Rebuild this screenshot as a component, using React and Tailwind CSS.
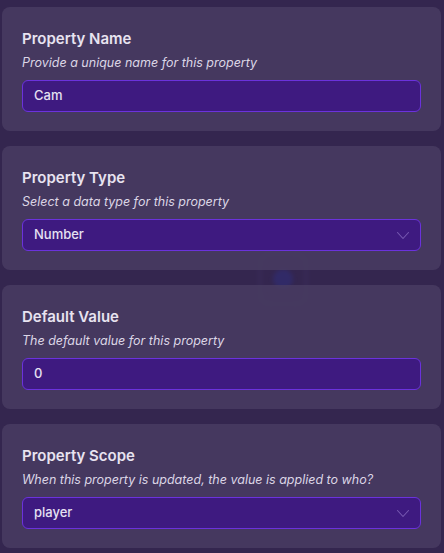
const fields = [
  { title: 'Property Name', hint: 'Provide a unique name for this property', value: 'Cam' },
  { title: 'Property Type', hint: 'Select a data type for this property', value: 'Number', select: true },
  { title: 'Default Value', hint: 'The default value for this property', value: '0' },
  { title: 'Property Scope', hint: 'When this property is updated, the value is applied to who?', value: 'player', select: true },
];

const Chevron = () => (
  <svg width="14" height="9" viewBox="0 0 14 9" fill="none" className="mr-[1px]">
    <path d="M1.5 1.5 7 7.5 12.5 1.5" stroke="#7658b0" strokeWidth="1.1" strokeLinecap="round" strokeLinejoin="round" />
  </svg>
);

const Field = ({ title, hint, value, select }) => (
  <div className="rounded-lg bg-[#4a3d63]/80 px-5 pt-[22px] pb-[19px]">
    <div className="text-[15px] leading-5 font-semibold text-[#e8e3f0]">{title}</div>
    <div className="mt-[5px] text-[12.5px] leading-[18px] italic text-[#dcd6e6]">{hint}</div>
    <div className="mt-[8px] h-8 rounded-md bg-[#3e1a80] border border-[#6b32dc] flex items-center pl-[11px] pr-[9px]">
      <span className="flex-1 text-[13px] font-medium text-[#e6e1f2]">{value}</span>
      {select && <Chevron />}
    </div>
  </div>
);

export default function App() {
  return (
    <div className="relative w-[444px] h-[553px] overflow-hidden bg-[#34264f]" style={{ fontFamily: 'Inter, "Noto Sans", sans-serif' }}>
      {/* faded logo behind the cards */}
      <svg className="absolute left-[256px] top-[250px] opacity-50 blur-[2px]" width="54" height="58" viewBox="0 0 54 58">
        <rect x="4" y="4" width="46" height="50" rx="10" fill="none" stroke="#3a2d58" strokeWidth="6" />
        <circle cx="27" cy="29" r="10" fill="#2f2f80" />
      </svg>
      <div className="relative flex flex-col gap-[15px] pl-[2px] pr-[3px] pt-[7px]">
        {fields.map((f) => (
          <Field key={f.title} {...f} />
        ))}
      </div>
    </div>
  );
}
